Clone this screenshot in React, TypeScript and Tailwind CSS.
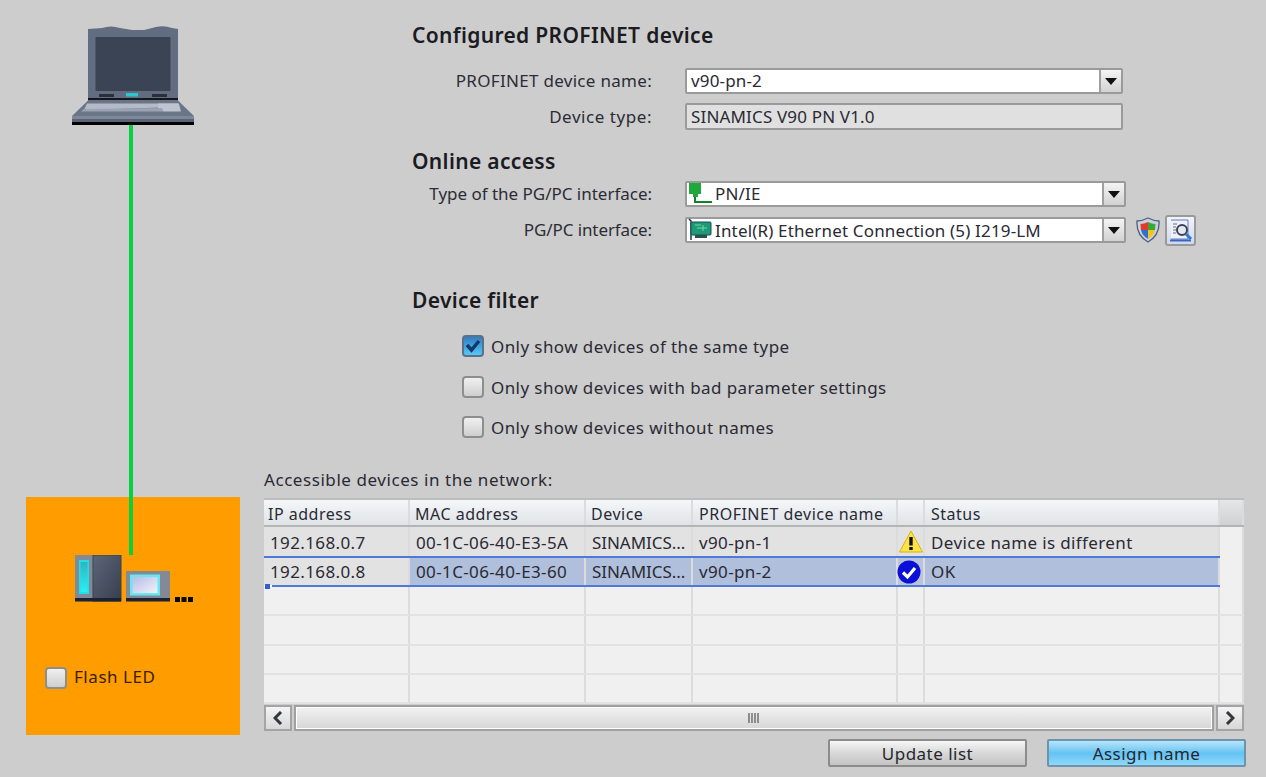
import React from "react";

const font = { fontFamily: '"Noto Sans", "DejaVu Sans", sans-serif' };

function Laptop() {
  return (
    <svg width="122" height="100" viewBox="0 0 122 100" className="block">
      <path d="M16 4 L30 3 Q39 0 48 3 L60 5 L72 5 L84 2 Q92 0 100 3 L106 4 L106 73 L16 73 Z" fill="#636d81" />
      <rect x="23.500" y="12" width="75" height="54" fill="#3b4454" />
      <rect x="27" y="69" width="15" height="3" fill="#2b2f38" />
      <rect x="80" y="69" width="15" height="3" fill="#2b2f38" />
      <rect x="54" y="68" width="12" height="3.500" fill="#28c8d0" />
      <rect x="16" y="73" width="90" height="2.500" fill="#15181f" />
      <path d="M16 75.500 L106 75.500 L122 91 L122 100 L0 100 L0 91 Z" fill="#6b7588" />
      <path d="M15 78.500 L107 78.500 L108.500 85 L90 85 L89 82.500 L12 85 Z" fill="#b4bbc8" />
      <path d="M86 78.500 L106 78.500 L109 86.500 L91 86.500 L90 83 L86 83 Z" fill="#bfc5d0" />
      <path d="M12 84 L90 83 L91 86.500 L9 86.500 Z" fill="#9ca4b4" />
      <rect x="0" y="91" width="122" height="3" fill="#7f8899" />
      <rect x="0" y="94" width="122" height="3" fill="#5a6376" />
      <rect x="0" y="97" width="122" height="3" fill="#020202" />
    </svg>
  );
}

function Device() {
  return (
    <svg width="118" height="47" viewBox="0 0 118 47" className="block">
      <defs>
        <linearGradient id="dk" x1="0" y1="0" x2="1" y2="1">
          <stop offset="0" stopColor="#5d6679" />
          <stop offset="1" stopColor="#363e4e" />
        </linearGradient>
        <linearGradient id="sc" x1="0" y1="0" x2="1" y2="1">
          <stop offset="0" stopColor="#b6bce6" />
          <stop offset="1" stopColor="#f2f3fb" />
        </linearGradient>
        <linearGradient id="cy" x1="0" y1="0" x2="0" y2="1">
          <stop offset="0" stopColor="#2fb4c0" />
          <stop offset="1" stopColor="#2af0f4" />
        </linearGradient>
      </defs>
      <rect x="0" y="0" width="18" height="46" fill="#828a98" />
      <rect x="4" y="5" width="10" height="34" fill="#1fdfe8" />
      <rect x="5.500" y="7" width="7" height="30" fill="url(#cy)" />
      <rect x="18" y="0" width="28" height="46" fill="url(#dk)" stroke="#3b4352" strokeWidth="1" />
      <rect x="0" y="43" width="46" height="3.500" fill="#1a2233" />
      <rect x="51" y="16" width="44" height="30" fill="#828a98" />
      <rect x="55" y="19.500" width="30" height="21" fill="#66e8f2" />
      <rect x="57.500" y="22" width="25" height="16" fill="url(#sc)" />
      <rect x="51" y="43" width="44" height="3.500" fill="#1a2233" />
      <rect x="100" y="42" width="5" height="5" fill="#0a0a0a" />
      <rect x="106.500" y="42" width="5" height="5" fill="#0a0a0a" />
      <rect x="113" y="42" width="5" height="5" fill="#0a0a0a" />
    </svg>
  );
}

function Check({ checked }: { checked?: boolean }) {
  return (
    <span
      className={
        "flex h-[22px] w-[22px] shrink-0 items-center justify-center rounded-[4px] border-2 " +
        (checked
          ? "border-[#5f6f85] bg-gradient-to-b from-[#2f7fc4] to-[#55c8f5]"
          : "border-[#8e8e8e] bg-gradient-to-b from-[#f0f0f0] to-[#cfcfcf]")
      }
    >
      {checked && (
        <svg width="16" height="14" viewBox="0 0 16 14">
          <path d="M2 6 L6.500 11 L14 2" fill="none" stroke="#14386e" strokeWidth="3.500" />
        </svg>
      )}
    </span>
  );
}

function Arrow() {
  return (
    <span className="flex h-full w-[22px] shrink-0 items-center justify-center border-l-2 border-[#a0a0a0] bg-gradient-to-b from-[#f4f4f4] to-[#d2d2d2]">
      <svg width="12" height="7" viewBox="0 0 12 7">
        <path d="M0 0 H12 L6 7 Z" fill="#111" />
      </svg>
    </span>
  );
}

function Combo({ w, children }: { w: string; children: React.ReactNode }) {
  return (
    <div className={w + " flex h-[26px] shrink-0 items-center rounded-[2px] border-2 border-[#9a9a9a] bg-white"}>
      <div className="flex min-w-0 flex-1 items-center pl-[3px]">{children}</div>
      <Arrow />
    </div>
  );
}

function Label({ children, cls }: { children: React.ReactNode; cls: string }) {
  return <div className={"w-[421px] shrink-0 whitespace-nowrap pr-[33px] text-right text-[17px] text-[#2c2c34] " + cls}>{children}</div>;
}

function NetIcon() {
  return (
    <svg width="24" height="24" viewBox="0 0 24 24" className="-ml-[2px] mr-[3px] shrink-0">
      <path d="M1 1 H13 V12 H10 V15 H5 V12 H1 Z" fill="#1fa83c" />
      <path d="M7 15 V20 H24" fill="none" stroke="#14802c" strokeWidth="2" />
    </svg>
  );
}

function CardIcon() {
  return (
    <svg width="24" height="24" viewBox="0 0 24 24" className="-ml-[2px] mr-[3px] shrink-0">
      <path d="M1 1 L3 3 V22" fill="none" stroke="#18384a" strokeWidth="1.500" />
      <rect x="3" y="4" width="20" height="13" rx="1" fill="#1f9a76" stroke="#17505c" />
      <path d="M7 7 H13 M15 7 V13 M9 10 H19" stroke="#6fd9a8" strokeWidth="1" />
      <path d="M7 17 H19 V20 H7 Z" fill="#2d4d55" />
    </svg>
  );
}

function Shield() {
  return (
    <svg width="24" height="26" viewBox="0 0 24 26" className="block">
      <path d="M12 1 Q18 4 23 4 Q24 18 12 25 Q0 18 1 4 Q6 4 12 1 Z" fill="#c9d0e0" stroke="#55617c" strokeWidth="1.300" />
      <path d="M12 5 Q8 7 4.500 7 L5 13 H12 Z" fill="#e23b2c" />
      <path d="M12 5 Q16 7 19.500 7 L19 13 H12 Z" fill="#3aa836" />
      <path d="M5 13 H12 V22 Q6.500 19 5 13 Z" fill="#2f6fd0" />
      <path d="M19 13 H12 V22 Q17.500 19 19 13 Z" fill="#f3c51c" />
    </svg>
  );
}

function Inspect() {
  return (
    <span className="flex h-[31px] w-[31px] items-center justify-center rounded-[3px] border-2 border-[#9a9a9a] bg-gradient-to-b from-[#f2f4fa] to-[#cfd8ee]">
      <svg width="26" height="26" viewBox="0 0 26 26">
        <path d="M3 3 H20 V22 H3" fill="#eef1fa" stroke="#5f7fc0" strokeWidth="1" />
        <path d="M2 23.500 H23" stroke="#3a64c0" strokeWidth="2" />
        <path d="M5 7 H9 M5 10 H8 M5 13 H8 M5 16 H8" stroke="#6a6a78" strokeWidth="1" />
        <circle cx="14" cy="13" r="5" fill="#e4e8f4" stroke="#3a4254" strokeWidth="2" />
        <path d="M18 17 L23 22" stroke="#2f7ad0" strokeWidth="3" />
      </svg>
    </span>
  );
}

function Heading({ children, cls }: { children: React.ReactNode; cls: string }) {
  return <div className={"pl-[148px] text-[21px] font-semibold leading-[28px] tracking-[0.34px] text-[#1b1b22] " + cls}>{children}</div>;
}

const cols = "grid grid-cols-[146px_176px_107px_205px_27px_295px_24px]";
const cellLine = "border-r-2 border-[#dcdcdc]";

function Cell({ children, cls = "" }: { children?: React.ReactNode; cls?: string }) {
  return <div className={"flex min-w-0 items-center overflow-hidden whitespace-nowrap pl-[6px] " + cellLine + " " + cls}>{children}</div>;
}

function Warn() {
  return (
    <svg width="24" height="23" viewBox="0 0 24 23" className="-ml-[5px] block shrink-0">
      <path d="M12 1 L23.500 22 H0.500 Z" fill="#fde24a" stroke="#d9b408" strokeWidth="1" />
      <rect x="10.300" y="7" width="3.400" height="8.500" fill="#111" />
      <rect x="10.300" y="17" width="3.400" height="3" fill="#111" />
    </svg>
  );
}

function Ok() {
  return (
    <svg width="24" height="24" viewBox="0 0 24 24" className="-ml-[7px] block shrink-0">
      <circle cx="12" cy="12" r="11.500" fill="#0a10d8" />
      <path d="M6 12.500 L10.500 17 L18 8" fill="none" stroke="#fff" strokeWidth="3.200" />
    </svg>
  );
}

function Table() {
  const emptyRows = [0, 1, 2, 3];
  return (
    <div className="w-[980px] border-t-2 border-[#bdbdbd] bg-[#f0f0f0] text-[17px] tracking-[0.37px] text-[#2a2a34]">
      <div className={cols + " h-[27px] border-b-2 border-[#b4b4b4] bg-gradient-to-b from-[#f5f7f9] to-[#dfe3e7] text-[16px] tracking-[0.5px]"}>
        <Cell cls="!pl-[4px] pt-[2px]">IP address</Cell>
        <Cell cls="!pl-[5px] pt-[2px]">MAC address</Cell>
        <Cell cls="!pl-[5px] pt-[2px]">Device</Cell>
        <Cell cls="!pl-[6px] pt-[2px]">PROFINET device name</Cell>
        <Cell />
        <Cell cls="pt-[2px]">Status</Cell>
        <Cell cls="border-r-0 bg-gradient-to-b from-[#e4e6e8] to-[#cfd1d3]" />
      </div>
      <div className={cols + " h-[29px] bg-[#e2e2e2]"}>
        <Cell cls="pt-[2px]">192.168.0.7</Cell>
        <Cell cls="pt-[2px]">00-1C-06-40-E3-5A</Cell>
        <Cell cls="pt-[2px] tracking-[-0.05px]">SINAMICS...</Cell>
        <Cell cls="pt-[2px]">v90-pn-1</Cell>
        <Cell cls="overflow-visible"><Warn /></Cell>
        <Cell cls="pt-[2px]">Device name is different</Cell>
        <Cell cls="border-r-0 bg-[#f0f0f0]" />
      </div>
      <div className={cols + " relative h-[31px]"}>
        <div className="absolute left-0 top-0 h-[2px] w-[956px] bg-[#4f79d8]" />
        <div className="absolute bottom-0 left-[8px] h-[2px] w-[948px] bg-[#4f79d8]" />
        <div className="absolute bottom-[-2px] left-[1px] h-[5px] w-[5px] bg-[#2f5fd0]" />
        <Cell cls="border-y-2 border-y-white bg-[#e2e2e2]">192.168.0.8</Cell>
        <Cell cls="border-y-2 border-y-white bg-[#b0bfdc]">00-1C-06-40-E3-60</Cell>
        <Cell cls="border-y-2 border-y-white bg-[#b0bfdc] tracking-[-0.05px]">SINAMICS...</Cell>
        <Cell cls="border-y-2 border-y-white bg-[#b0bfdc]">v90-pn-2</Cell>
        <Cell cls="overflow-visible border-y-2 border-y-white bg-[#b8c4dc]"><Ok /></Cell>
        <Cell cls="border-y-2 border-y-white bg-[#b0bfdc]">OK</Cell>
        <Cell cls="border-r-0 bg-[#f0f0f0]" />
      </div>
      {emptyRows.map((r) => (
        <div key={r} className={cols + " h-[29.250px] border-b-2 border-[#e2e2e2]"}>
          <Cell /><Cell /><Cell /><Cell /><Cell /><Cell /><Cell cls="border-r-0" />
        </div>
      ))}
    </div>
  );
}

function ScrollBtn({ dir }: { dir: "l" | "r" }) {
  return (
    <span className="flex h-[26px] w-[28px] shrink-0 items-center justify-center border-2 border-[#a4a4a4] bg-gradient-to-b from-[#f4f4f4] to-[#d8d8d8]">
      <svg width="10" height="14" viewBox="0 0 10 14">
        <path d={dir === "l" ? "M8 1 L2 7 L8 13" : "M2 1 L8 7 L2 13"} fill="none" stroke="#33363c" strokeWidth="3" />
      </svg>
    </span>
  );
}

function Scrollbar() {
  return (
    <div className="flex h-[27px] w-[980px] items-center gap-[2px]">
      <ScrollBtn dir="l" />
      <div className="flex h-[26px] flex-1 items-center justify-center border-2 border-[#a0a0a0] bg-gradient-to-b from-[#f2f2f2] to-[#d6d6d6] shadow-[inset_0_0_0_1px_#fff]">
        <svg width="12" height="10" viewBox="0 0 12 10">
          <path d="M1 0 V10 M4 0 V10 M7 0 V10 M10 0 V10" stroke="#555" strokeWidth="1.200" />
        </svg>
      </div>
      <ScrollBtn dir="r" />
    </div>
  );
}

const filters = [
  ["Only show devices of the same type", true, "mt-[21px]"],
  ["Only show devices with bad parameter settings", false, "mt-[19px]"],
  ["Only show devices without names", false, "mt-[18px]"],
] as const;

const val = "whitespace-nowrap text-[17px] tracking-[0.16px] text-[#2a2a34]";

export default function App() {
  return (
    <div style={font} className="flex h-[777px] w-[1266px] overflow-hidden bg-[#cdcdcd]">
      <div className="flex w-[264px] shrink-0 flex-col pl-[26px]">
        <div className="ml-[46px] mt-[25px]"><Laptop /></div>
        <div className="ml-[103px] h-[372px] w-[4px] bg-[#06d23f]" />
        <div className="h-[238px] w-[214px] bg-[#ff9d00] pl-[49px]">
          <div className="ml-[54px] h-[58px] w-[4px] bg-[#06d23f]" />
          <Device />
          <label className="-ml-[30px] mt-[65px] flex items-center gap-[7px] text-[17px] tracking-[0.55px] text-[#3a1d00]">
            <Check />
            <span className="-mt-[3px]">Flash LED</span>
          </label>
        </div>
      </div>

      <div className="flex min-w-0 flex-1 flex-col">
        <Heading cls="mt-[21px]">Configured PROFINET device</Heading>
        <div className="mt-[19px] flex h-[26px] items-center">
          <Label cls="tracking-[0.3px]">PROFINET device name:</Label>
          <Combo w="w-[438px]"><span className={val + " ml-[1px]"}>v90-pn-2</span></Combo>
        </div>
        <div className="mt-[9px] flex h-[27px] items-center">
          <Label cls="tracking-[0.55px]">Device type:</Label>
          <div className={val + " flex h-[27px] w-[438px] shrink-0 items-center rounded-[2px] border-2 border-[#9a9a9a] bg-[#e0e0e0] pl-[4px]"}>
            SINAMICS V90 PN V1.0
          </div>
        </div>
        <Heading cls="mt-[17px]">Online access</Heading>
        <div className="mt-[6px] flex h-[26px] items-center">
          <Label cls="-tracking-[0.02px]">Type of the PG/PC interface:</Label>
          <Combo w="w-[441px]"><NetIcon /><span className={val}>PN/IE</span></Combo>
        </div>
        <div className="mt-[10px] flex h-[26px] items-center">
          <Label cls="-tracking-[0.1px]">PG/PC interface:</Label>
          <Combo w="w-[441px]"><CardIcon /><span className={val + " mt-[1px]"}>Intel(R) Ethernet Connection (5) I219-LM</span></Combo>
          <div className="ml-[10px] shrink-0"><Shield /></div>
          <div className="ml-[5px] shrink-0"><Inspect /></div>
        </div>
        <Heading cls="mt-[43px]">Device filter</Heading>
        <div className="flex flex-col pl-[198px]">
          {filters.map(([t, c, m]) => (
            <label key={t} className={m + " flex h-[22px] items-center gap-[7px] whitespace-nowrap text-[17px] tracking-[0.42px] text-[#2a2a34]"}>
              <Check checked={c} />
              <span className="mt-[1px]">{t}</span>
            </label>
          ))}
        </div>
        <div className="mt-[31px] text-[17px] leading-[22px] tracking-[0.56px] text-[#2a2a34]">Accessible devices in the network:</div>
        <div className="mt-[7px]"><Table /></div>
        <Scrollbar />
        <div className="mt-[8px] flex w-[982px] justify-end gap-[20px] text-[17px] tracking-[0.48px] text-[#26262e]">
          <button className="h-[28px] w-[199px] rounded-[2px] border-2 border-[#8c8c8c] bg-gradient-to-b from-[#f6f6f6] via-[#d8d8d8] to-[#c4c4c4]">Update list</button>
          <button className="h-[28px] w-[199px] rounded-[2px] border-2 border-[#6f93aa] bg-gradient-to-b from-[#b6e5fb] via-[#63c3f3] to-[#8ed8fa]">Assign name</button>
        </div>
      </div>
    </div>
  );
}
